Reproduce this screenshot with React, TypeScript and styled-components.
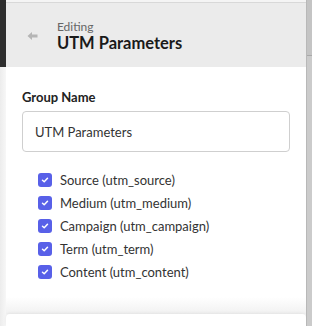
import styled, { createGlobalStyle } from "styled-components";

const GlobalStyle = createGlobalStyle`
  html, body {
    margin: 0;
    padding: 0;
    background: #ffffff;
    font-family: Lato, "Liberation Sans", sans-serif;
  }
`

const Page = styled.div`
  width: 312px;
  height: 326px;
  display: flex;
  overflow: hidden;
`

const LeftRail = styled.div`
  width: 7px;
  display: flex;
  flex-direction: column;
  background: linear-gradient(to right, #ececec, #f7f7f7);
`

const RailDark = styled.div`
  height: 67px;
  background: #2e2e2e;
`

const Main = styled.div`
  flex: 1;
  display: flex;
  flex-direction: column;
  background: #f6f6f6;
`

const TopLine = styled.div`
  height: 2px;
  background: #f4f4f4;
  border-bottom: 1px solid #d8d8d8;
`

const Header = styled.div`
  height: 64px;
  background: #ebebeb;
  display: flex;
  align-items: center;
  padding-left: 21px;
  gap: 19px;
`

const BackArrow = styled.svg`
  width: 11px;
  height: 10px;
  margin-top: 2px;
`

const TitleBlock = styled.div`
  display: flex;
  flex-direction: column;
  margin-top: 3px;
`

const Overline = styled.span`
  font-size: 12px;
  color: #666;
  line-height: 13px;
`

const Title = styled.h1`
  margin: 0;
  font-size: 16.5px;
  font-weight: 700;
  color: #1a1a1a;
  line-height: 20px;
`

const Panel = styled.div`
  background: #ffffff;
  padding: 22px 16px 0 16px;
  height: 208px;
`

const FieldLabel = styled.label`
  display: block;
  font-size: 13px;
  font-weight: 700;
  color: #222;
  line-height: 16px;
  margin-bottom: 6px;
`

const TextInput = styled.div`
  box-sizing: border-box;
  width: 268px;
  height: 41px;
  border: 1px solid #cfcfcf;
  border-radius: 4px;
  display: flex;
  align-items: center;
  padding-left: 12px;
  font-size: 13px;
  color: #333;
`

const CheckList = styled.div`
  display: flex;
  flex-direction: column;
  gap: 9px;
  margin-top: 21px;
  padding-left: 16px;
`

const CheckRow = styled.div`
  display: flex;
  align-items: center;
  gap: 8px;
  font-size: 13px;
  color: #333;
  line-height: 14px;
`

const Box = styled.span`
  width: 14px;
  height: 14px;
  border-radius: 3px;
  background: #5860e8;
  display: flex;
  align-items: center;
  justify-content: center;
`

const Gap = styled.div`
  height: 17px;
  background: linear-gradient(to bottom, #ffffff, #f1f1f1);
`

const Card = styled.div`
  flex: 1;
  background: #ffffff;
  border-top-left-radius: 4px;
  border-top-right-radius: 4px;
  box-shadow: 0 -1px 3px rgba(0, 0, 0, 0.06);
`

const RightRail = styled.div`
  width: 6px;
  background: #cbcbcb;
  border-left: 1px solid #b8b8b8;
  display: flex;
  flex-direction: column;
`

const RailThumb = styled.div`
  height: 55px;
  border-bottom: 1px solid #a9a9a9;
  background: #c4c4c4;
`

const params = [
  "Source (utm_source)",
  "Medium (utm_medium)",
  "Campaign (utm_campaign)",
  "Term (utm_term)",
  "Content (utm_content)",
]

export default function App() {
  return (
    <Page>
      <GlobalStyle />
      <LeftRail>
        <RailDark />
      </LeftRail>
      <Main>
        <TopLine />
        <Header>
          <BackArrow viewBox="0 0 11 10">
            <path d="M0.5 5 L5 1 L5 3.5 L10.5 3.5 L10.5 6.5 L5 6.5 L5 9 Z" fill="#b5b5b5" />
          </BackArrow>
          <TitleBlock>
            <Overline>Editing</Overline>
            <Title>UTM Parameters</Title>
          </TitleBlock>
        </Header>
        <Panel>
          <FieldLabel>Group Name</FieldLabel>
          <TextInput>UTM Parameters</TextInput>
          <CheckList>
            {params.map((p) => (
              <CheckRow key={p}>
                <Box>
                  <svg width="8" height="8" viewBox="0 0 8 8">
                    <path d="M1.5 4.3 L3.2 5.8 L6.5 2.2" stroke="#fff" strokeWidth="1.5" fill="none" strokeLinecap="round" strokeLinejoin="round" />
                  </svg>
                </Box>
                {p}
              </CheckRow>
            ))}
          </CheckList>
        </Panel>
        <Gap />
        <Card />
      </Main>
      <RightRail>
        <RailThumb />
      </RightRail>
    </Page>
  )
}
